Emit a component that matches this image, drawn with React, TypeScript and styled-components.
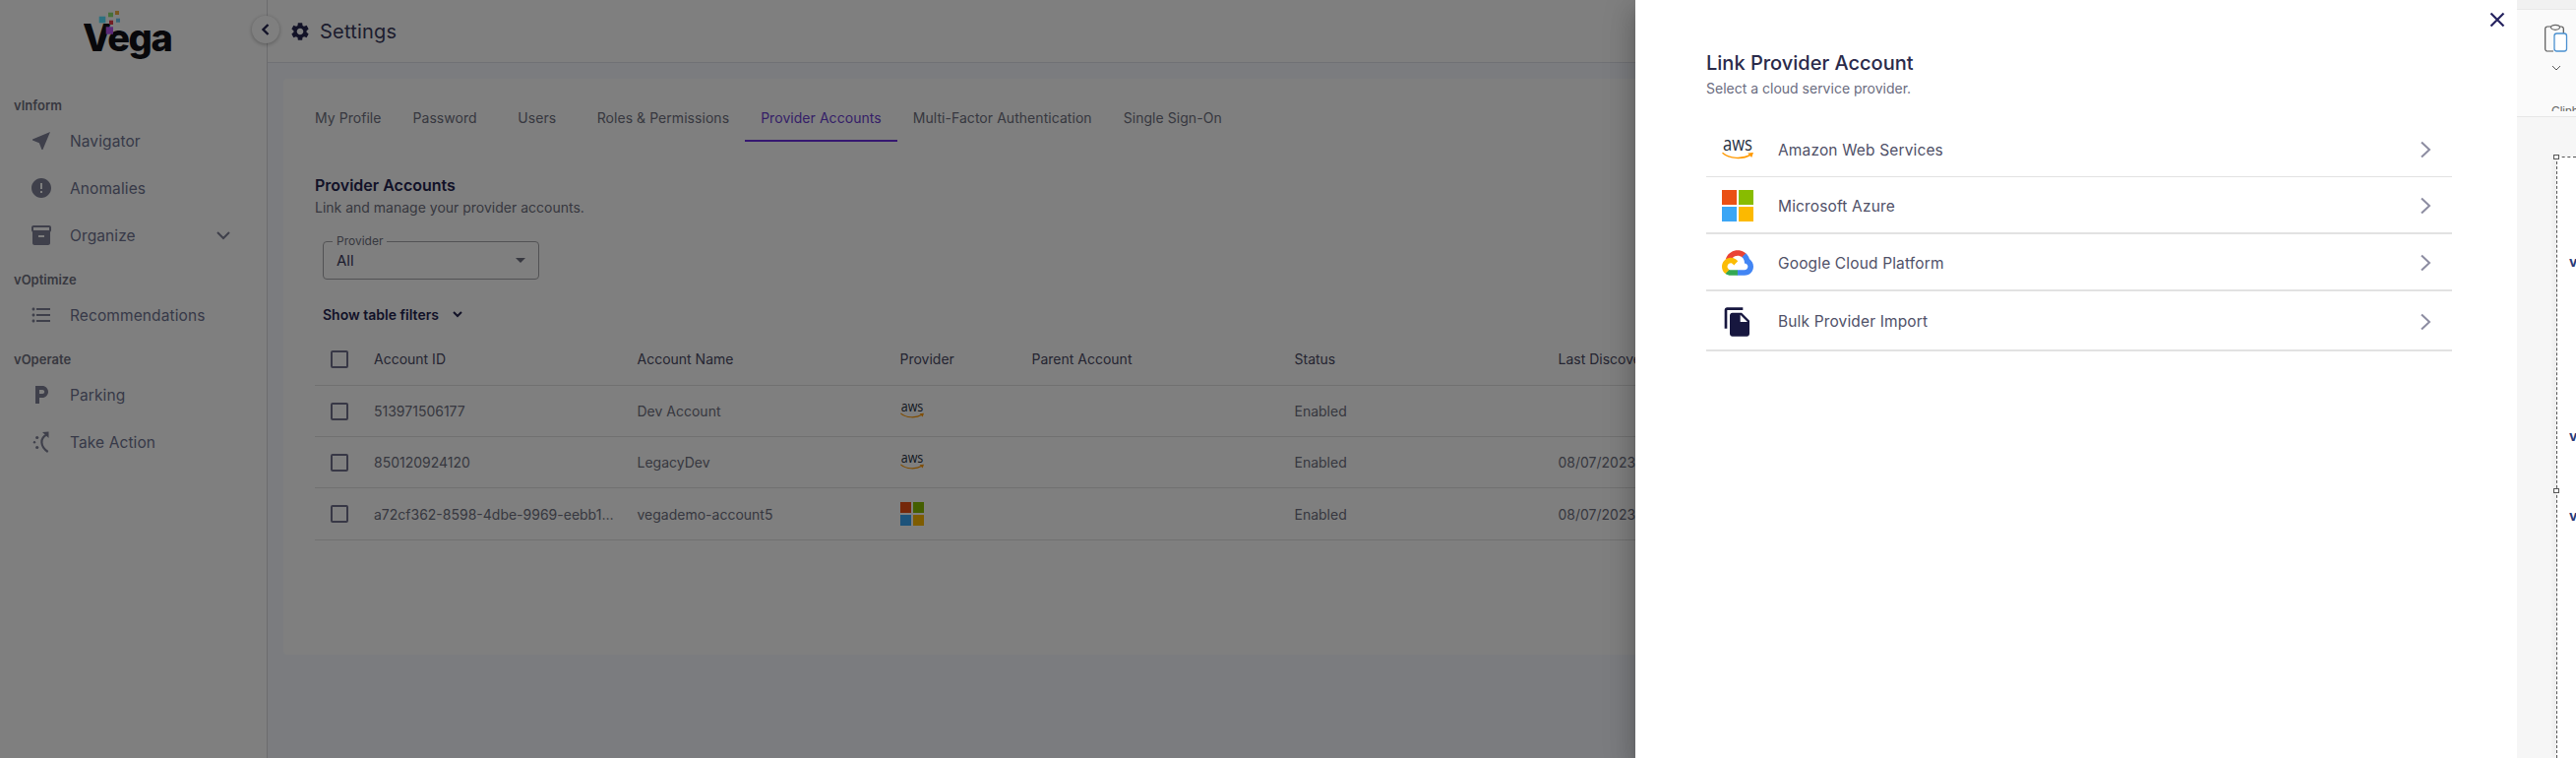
import React from "react";
import styled, { createGlobalStyle } from "styled-components";

const Global = createGlobalStyle`
  html, body { margin: 0; padding: 0; height: 100%; overflow: hidden; background: #fff; }
  body { font-family: Inter, "Noto Sans", sans-serif; color: #2a2a4a; }
  * { box-sizing: border-box; }
`;

const Shell = styled.div`display: flex; width: 2618px; height: 770px; overflow: hidden;`;
const AppFrame = styled.div`position: relative; display: flex; width: 2558px; height: 770px; overflow: hidden; flex: none;`;

const Sidebar = styled.aside`
  width: 272px; flex: none; background: #fff; border-right: 1px solid #d8d8dc;
  display: flex; flex-direction: column; padding-left: 14px;
`;
const LogoWrap = styled.div`height: 96px; padding-left: 71px; padding-top: 10px; flex: none;`;
const GroupLabel = styled.div`
  font-size: 13px; font-weight: 600; color: #6f7080; height: 22px; line-height: 22px; margin-bottom: 1px;
`;
const SideItem = styled.div<{ $last?: boolean }>`
  display: flex; align-items: center; height: 48px; padding-left: 16px; padding-right: 35px;
  font-size: 15.5px; color: #6e7390; gap: 17px; margin-bottom: ${p => (p.$last ? "10px" : "0")};
  position: relative;
  & > svg:first-child { width: 24px; height: 24px; fill: #7e8096; flex: none; }
`;
const SideText = styled.span`flex: 1; letter-spacing: .1px;`;
const SideChevron = styled.svg`width: 18px; height: 18px; fill: none; stroke: #7e8096; stroke-width: 2;`;

const Main = styled.main`flex: 1; min-width: 0; background: #f6f8ff; display: flex; flex-direction: column;`;
const TopBar = styled.header`
  height: 64px; flex: none; background: #fff; border-bottom: 1px solid #e1e3ea;
  display: flex; align-items: center; padding-left: 22px; gap: 9px; position: relative;
`;
const GearIcon = styled.svg`width: 22px; height: 22px; fill: #24244f; flex: none;`;
const PageTitle = styled.h1`margin: 0; font-size: 20px; font-weight: 400; color: #3a3a5c; line-height: 24px; letter-spacing: .2px;`;
const CollapseBtn = styled.button`
  position: absolute; left: -16px; top: 16px; width: 28px; height: 28px; border-radius: 50%;
  border: 0; background: #fff; box-shadow: 0 1px 4px rgba(0,0,0,.3); padding: 0;
  display: flex; align-items: center; justify-content: center;
  svg { width: 14px; height: 14px; fill: none; stroke: #24244f; stroke-width: 2.4; }
`;
const Card = styled.section`
  margin: 16px 16px 0; height: 585px; background: #fff; border-radius: 4px;
  padding: 16px 16px 0; flex: none;
`;
const Tabs = styled.nav`display: flex; height: 48px;`;
const Tab = styled.div<{ $active?: boolean }>`
  min-width: 90px; padding: 0 16px; display: flex; align-items: center; justify-content: center;
  font-size: 14px; letter-spacing: .05px; color: ${p => (p.$active ? "#6b3fd0" : "#6e7080")};
  border-bottom: 2px solid ${p => (p.$active ? "#6b2fe0" : "transparent")};
  white-space: nowrap;
`;
const SectionHead = styled.div`padding: 34px 0 0 16px;`;
const SectionTitle = styled.h2`margin: 0; font-size: 16px; font-weight: 600; line-height: 20px; color: #24244f;`;
const SectionSub = styled.p`margin: 3px 0 0; font-size: 14px; line-height: 20px; color: #6e7080;`;

const SelectField = styled.div`
  margin: 24px 0 0 24px; padding: 0 13px; width: 220px; height: 39px; position: relative;
  border: 1px solid #a5a5a8; border-radius: 4px; display: flex; align-items: center;
`;
const SelectLegend = styled.span`
  position: absolute; top: -8px; left: 9px; padding: 0 4px; background: #fff;
  font-size: 12px; line-height: 14px; color: #6e7080;
`;
const SelectValue = styled.span`font-size: 15px; color: #3a3a5c; flex: 1;`;
const Caret = styled.span`
  width: 0; height: 0; border-left: 5px solid transparent; border-right: 5px solid transparent;
  border-top: 5px solid #6e7080; margin-right: 0;
`;
const Filters = styled.div`
  margin: 24px 0 0 24px; display: flex; align-items: center; gap: 12px; height: 22px;
  font-size: 14px; font-weight: 600; color: #24244f;
  svg { width: 14px; height: 14px; fill: none; stroke: #24244f; stroke-width: 2; }
`;

const Table = styled.div`margin: 8px 0 0 16px; width: 2200px;`;
const Row = styled.div<{ $h: number }>`
  display: grid; grid-template-columns: 60px 267.5px 267px 134px 267px 268px 1fr;
  height: ${p => p.$h}px; align-items: center; border-bottom: 1px solid #e0e0e0;
`;
const HeadCell = styled.div`font-size: 14px; color: #4a4a64; white-space: nowrap;`;
const Cell = styled.div`
  font-size: 14px; color: #6e7080; white-space: nowrap; display: flex; align-items: center;
`;
const Ellipsis = styled.span`display: block; max-width: 246px; overflow: hidden; text-overflow: ellipsis;`;
const CheckCell = styled.div`padding-left: 16px; display: flex; align-items: center;`;
const Check = styled.span`
  width: 18px; height: 18px; border: 2px solid #70708c; border-radius: 2px; display: block;
`;

const Backdrop = styled.div`position: absolute; inset: 0; background: rgba(0,0,0,.5);`;
const Drawer = styled.div`
  position: absolute; top: 0; bottom: 0; right: 0; width: 896px; background: #fff;
  box-shadow: 0 8px 10px -5px rgba(0,0,0,.2), 0 16px 24px 2px rgba(0,0,0,.14), 0 6px 30px 5px rgba(0,0,0,.12);
  padding: 0 66px 0 72px;
`;
const CloseBtn = styled.button`
  position: absolute; top: 10px; right: 10px; width: 20px; height: 20px; padding: 0; border: 0; background: none;
  svg { width: 20px; height: 20px; fill: none; stroke: #25225f; stroke-width: 2.2; display: block; }
`;
const DrawerTitle = styled.h2`
  margin: 0; padding-top: 50px; font-size: 20px; line-height: 28px; font-weight: 500; color: #2a2a4a;
`;
const DrawerSub = styled.p`margin: 2px 0 0; font-size: 14px; line-height: 20px; color: #6a6c80;`;
const ProviderList = styled.div`margin-top: 23px; display: flex; flex-direction: column;`;
const ProviderRow = styled.div<{ $h: number; $line: number }>`
  height: ${p => p.$h}px; display: flex; align-items: center; padding-left: 16px; padding-top: 2px;
  border-bottom: ${p => p.$line}px solid #e2e2e2;
`;
const ProviderIcon = styled.div`width: 32px; height: 32px; flex: none; display: flex; align-items: center; justify-content: center;`;
const ProviderName = styled.span`margin-left: 25px; flex: 1; font-size: 15.5px; letter-spacing: .15px; color: #505168;`;
const RowChevron = styled.svg`width: 14px; height: 18px; fill: none; stroke: #8c8ca1; stroke-width: 2; margin-right: 20px;`;

const AwsSvg = styled.svg<{ $w: number }>`width: ${p => p.$w}px; display: block; overflow: visible;`;
const AwsText = styled.text`font-family: "Open Sans", Inter, sans-serif; font-size: 20px; font-weight: 500; fill: #252f3e;`;
const MsGrid = styled.div<{ $s: number; $g: number }>`
  display: grid; grid-template-columns: ${p => p.$s}px ${p => p.$s}px; gap: ${p => p.$g}px;
`;
const MsTile = styled.span<{ $c: string; $s: number }>`
  width: ${p => p.$s}px; height: ${p => p.$s}px; background: ${p => p.$c}; display: block;
`;
const CloudSvg = styled.svg`width: 32px; height: 26px; display: block;`;
const BulkSvg = styled.svg`width: 32px; height: 32px; fill: #17173f; display: block;`;

const VegaText = styled.text`font-family: Inter, sans-serif; font-weight: 800; font-size: 38px; letter-spacing: -1.5px; fill: #111116;`;

const RightPane = styled.aside`flex: 1; background: #f6f6f6; display: flex; flex-direction: column; overflow: hidden; min-width: 0;`;
const TopStrip = styled.div`height: 10px; flex: none; background: #f1f1f1; border-bottom: 1px solid #e8e8e8;`;
const Ribbon = styled.div`
  height: 109px; flex: none; background: #fafafa; border-bottom: 1px solid #e6e6e6;
  padding: 14px 0 5px 27px;
`;
const RibbonClip = styled.div`height: 100%; overflow: hidden; display: flex; flex-direction: column;`;
const PasteIcon = styled.svg`width: 26px; height: 30px; display: block; flex: none;`;
const RibbonCaret = styled.svg`width: 10px; height: 6px; fill: none; stroke: #555; stroke-width: 1; margin: 12px 0 0 8px; flex: none; display: block;`;
const RibbonLabel = styled.div`margin: 34px 0 0 8px; font-family: "Liberation Sans", sans-serif; font-size: 12px; line-height: 14px; color: #666; white-space: nowrap; flex: none;`;
const Canvas = styled.div`flex: 1; padding: 40px 0 0 40px; min-height: 0;`;
const PageSheet = styled.div`
  position: relative; height: 100%; background: #fff; border-left: 1px dashed #555; border-top: 1px dashed #555;
  box-shadow: -4px 0 4px rgba(0,0,0,.03);
`;
const Handle = styled.span<{ $y: number }>`
  position: absolute; left: -4px; top: ${p => p.$y}px; width: 6px; height: 5px; background: #fff; border: 1px solid #555;
`;
const CanvasV = styled.span<{ $y: number }>`
  position: absolute; left: 12px; top: ${p => p.$y}px; font-size: 14px; line-height: 16px; font-weight: 700; color: #2a3a78;
`;

const AwsLogo = ({ w }: { w: number }) => (
  <AwsSvg $w={w} viewBox="0 0 32 20" aria-label="aws">
    <AwsText x="1" y="11" textLength="30" lengthAdjust="spacingAndGlyphs">aws</AwsText>
    <path d="M0.5 13.2C8 19.6 21 20 29.4 15" fill="none" stroke="#f90" strokeWidth="1.5" />
    <path d="M26.2 13.5 L32 13 L30.2 18 Z" fill="#f90" />
  </AwsSvg>
);
const MsLogo = ({ s, g }: { s: number; g: number }) => (
  <MsGrid $s={s} $g={g}>
    {["#ea5014", "#88bc00", "#3ba6f5", "#fcb900"].map(c => <MsTile key={c} $c={c} $s={s} />)}
  </MsGrid>
);

const Chev = () => <RowChevron viewBox="0 0 14 18"><path d="M3 1.5 11 9 3 16.5" /></RowChevron>;

const providers = [
  { name: "Amazon Web Services", h: 57, line: 1, icon: <AwsLogo w={32} /> },
  { name: "Microsoft Azure", h: 58, line: 2, icon: <MsLogo s={15} g={2} /> },
  {
    name: "Google Cloud Platform", h: 58, line: 2, icon: (
      <CloudSvg viewBox="0 0 256 206">
        <path fill="#EA4335" d="m170.252 56.819 22.253-22.253 1.483-9.37C153.437-11.677 88.976-7.496 52.42 33.92 42.267 45.423 34.734 59.764 30.717 74.573l7.97-1.123 44.505-7.34 3.436-3.513c19.797-21.742 53.27-24.667 76.128-6.168l7.496.39Z" />
        <path fill="#4285F4" d="M224.205 73.918c-5.115-18.836-15.616-35.769-30.217-48.722l-31.232 31.232c13.188 10.776 20.701 27.01 20.379 44.037v5.544c15.351 0 27.797 12.445 27.797 27.796 0 15.352-12.446 27.485-27.797 27.485h-55.671l-5.466 5.934v33.34l5.466 5.231h55.671c39.93.311 72.552-31.494 72.863-71.424.188-24.203-11.745-46.893-31.793-60.453" />
        <path fill="#34A853" d="M71.87 205.796h55.593V161.29H71.87c-3.961-.001-7.797-.852-11.399-2.498l-7.887 2.42-22.409 22.253-1.952 7.574c12.567 9.489 27.9 14.825 43.647 14.757" />
        <path fill="#FBBC05" d="M71.87 61.425C31.94 61.664-.237 94.228.001 134.159c.134 22.298 10.547 43.288 28.222 56.881l32.248-32.248c-13.991-6.321-20.208-22.786-13.887-36.776 6.32-13.99 22.786-20.207 36.775-13.887 6.161 2.784 11.095 7.718 13.88 13.887l32.248-32.248c-13.72-17.936-35.04-28.42-57.617-28.343" />
      </CloudSvg>
    )
  },
  {
    name: "Bulk Provider Import", h: 61, line: 2, icon: (
      <BulkSvg viewBox="0 0 24 24"><path d="M16 1H4c-1.1 0-2 .9-2 2v14h2V3h12V1zm-1 4 6 6v10c0 1.1-.9 2-2 2H7.99C6.89 23 6 22.1 6 21l.01-14c0-1.1.89-2 1.99-2h7zm-1 7h5.5L14 6.5V12z" /></BulkSvg>
    )
  },
];

const accounts = [
  { id: "513971506177", name: "Dev Account", aws: true, date: "", h: 52 },
  { id: "850120924120", name: "LegacyDev", aws: true, date: "08/07/2023", h: 52 },
  { id: "a72cf362-8598-4dbe-9969-eebb1c4a70de", name: "vegademo-account5", aws: false, date: "08/07/2023", h: 53 },
];

export default function App() {
  return (
    <Shell>
      <Global />
      <AppFrame>
        <Sidebar>
          <LogoWrap>
            <svg width="90" height="56" viewBox="0 0 90 56" aria-label="Vega">
              <VegaText x="-1" y="42">Vega</VegaText>
              <rect x="15.7" y="6.7" width="6.6" height="6.6" fill="#58e0ff" />
              <rect x="25" y="2.700" width="5" height="4.600" fill="#8fe070" />
              <rect x="26" y="10.700" width="4" height="4.300" fill="#e83a48" />
              <rect x="32" y="1" width="4" height="4" fill="#f0b040" />
              <rect x="33" y="8.700" width="4" height="4" fill="#6cc8f0" />
              <rect x="22.700" y="17.300" width="7.300" height="7.400" fill="#b654f0" />
            </svg>
          </LogoWrap>
          <GroupLabel>vInform</GroupLabel>
          <SideItem>
            <svg viewBox="0 0 24 24"><path d="M21 3 3 10.53v.98l6.84 2.65L12.48 21h.98L21 3z" /></svg>
            <SideText>Navigator</SideText>
          </SideItem>
          <SideItem>
            <svg viewBox="0 0 24 24"><path d="M12 2C6.48 2 2 6.48 2 12s4.48 10 10 10 10-4.48 10-10S17.52 2 12 2zm1 15h-2v-2h2v2zm0-4h-2V7h2v6z" /></svg>
            <SideText>Anomalies</SideText>
          </SideItem>
          <SideItem $last>
            <svg viewBox="0 0 24 24"><path d="M20 2H4c-1 0-2 .9-2 2v3.01c0 .72.43 1.34 1 1.69V20c0 1.1 1.1 2 2 2h14c.9 0 2-.9 2-2V8.7c.57-.35 1-.97 1-1.69V4c0-1.1-1-2-2-2zm-5 12H9v-2h6v2zm5-7H4V4l16-.02V7z" /></svg>
            <SideText>Organize</SideText>
            <SideChevron viewBox="0 0 18 18"><path d="M3 6l6 6 6-6" /></SideChevron>
          </SideItem>
          <GroupLabel>vOptimize</GroupLabel>
          <SideItem $last>
            <svg viewBox="0 0 24 24"><path d="M4 10.5c-.83 0-1.5.67-1.5 1.5s.67 1.5 1.5 1.5 1.5-.67 1.5-1.5-.67-1.5-1.5-1.5zm0-6c-.83 0-1.5.67-1.5 1.5S3.17 7.5 4 7.5 5.5 6.83 5.5 6 4.83 4.5 4 4.5zm0 12c-.83 0-1.5.68-1.5 1.5s.68 1.5 1.5 1.5 1.5-.68 1.5-1.5-.67-1.5-1.5-1.5zM7 19h14v-2H7v2zm0-6h14v-2H7v2zm0-8v2h14V5H7z" /></svg>
            <SideText>Recommendations</SideText>
          </SideItem>
          <GroupLabel>vOperate</GroupLabel>
          <SideItem>
            <svg viewBox="0 0 24 24"><path d="M13 3H6v18h4v-6h3c3.31 0 6-2.69 6-6s-2.69-6-6-6zm.2 8H10V7h3.2c1.1 0 2 .9 2 2s-.9 2-2 2z" /></svg>
            <SideText>Parking</SideText>
          </SideItem>
          <SideItem>
            <svg viewBox="0 0 24 24">
              <circle cx="5" cy="12.300" r="1.200" />
              <circle cx="7.700" cy="7.500" r="1.600" />
              <circle cx="7.700" cy="17.500" r="1.600" />
              <path d="M17.500 4.500C10.500 8 10.500 16.500 18.700 22" fill="none" stroke="#7e8096" strokeWidth="2.200" />
              <path d="M13 2 19.500 1.500 19.500 8Z" />
            </svg>
            <SideText>Take Action</SideText>
          </SideItem>
        </Sidebar>
        <Main>
          <TopBar>
            <CollapseBtn aria-label="Collapse">
              <svg viewBox="0 0 14 14"><path d="M9.5 2 4.500 7l5 5" /></svg>
            </CollapseBtn>
            <GearIcon viewBox="0 0 24 24"><path d="M19.14 12.94c.04-.3.06-.61.06-.94 0-.32-.02-.64-.07-.94l2.03-1.58c.18-.14.23-.41.12-.61l-1.92-3.32c-.12-.22-.37-.29-.59-.22l-2.39.96c-.5-.38-1.03-.7-1.62-.94l-.36-2.54c-.04-.24-.24-.41-.48-.41h-3.84c-.24 0-.43.17-.47.41l-.36 2.54c-.59.24-1.13.57-1.62.94l-2.39-.96c-.22-.08-.47 0-.59.22L2.74 8.87c-.12.21-.08.47.12.61l2.03 1.58c-.05.3-.09.63-.09.94s.02.64.07.94l-2.03 1.58c-.18.14-.23.41-.12.61l1.92 3.32c.12.22.37.29.59.22l2.39-.96c.5.38 1.03.7 1.62.94l.36 2.54c.05.24.24.41.48.41h3.84c.24 0 .44-.17.47-.41l.36-2.54c.59-.24 1.13-.56 1.62-.94l2.39.96c.22.08.47 0 .59-.22l1.92-3.32c.12-.22.07-.47-.12-.61l-2.01-1.58zM12 15.6c-1.98 0-3.6-1.62-3.6-3.6s1.62-3.6 3.6-3.6 3.6 1.62 3.6 3.6-1.62 3.6-3.6 3.6z" /></GearIcon>
            <PageTitle>Settings</PageTitle>
          </TopBar>
          <Card>
            <Tabs>
              <Tab>My Profile</Tab>
              <Tab>Password</Tab>
              <Tab>Users</Tab>
              <Tab>Roles &amp; Permissions</Tab>
              <Tab $active>Provider Accounts</Tab>
              <Tab>Multi-Factor Authentication</Tab>
              <Tab>Single Sign-On</Tab>
            </Tabs>
            <SectionHead>
              <SectionTitle>Provider Accounts</SectionTitle>
              <SectionSub>Link and manage your provider accounts.</SectionSub>
            </SectionHead>
            <SelectField>
              <SelectLegend>Provider</SelectLegend>
              <SelectValue>All</SelectValue>
              <Caret />
            </SelectField>
            <Filters>
              Show table filters
              <svg viewBox="0 0 14 14"><path d="M3 5l4 4 4-4" /></svg>
            </Filters>
            <Table>
              <Row $h={54}>
                <CheckCell><Check /></CheckCell>
                <HeadCell>Account ID</HeadCell>
                <HeadCell>Account Name</HeadCell>
                <HeadCell>Provider</HeadCell>
                <HeadCell>Parent Account</HeadCell>
                <HeadCell>Status</HeadCell>
                <HeadCell>Last Discovered</HeadCell>
              </Row>
              {accounts.map(a => (
                <Row key={a.id} $h={a.h}>
                  <CheckCell><Check /></CheckCell>
                  <Cell><Ellipsis>{a.id}</Ellipsis></Cell>
                  <Cell>{a.name}</Cell>
                  <Cell>{a.aws ? <AwsLogo w={24} /> : <MsLogo s={11} g={2} />}</Cell>
                  <Cell />
                  <Cell>Enabled</Cell>
                  <Cell>{a.date}</Cell>
                </Row>
              ))}
            </Table>
          </Card>
        </Main>
        <Backdrop />
        <Drawer>
          <CloseBtn aria-label="Close">
            <svg viewBox="0 0 20 20"><path d="M3.500 3.500 16.500 16.500M16.500 3.500 3.500 16.500" /></svg>
          </CloseBtn>
          <DrawerTitle>Link Provider Account</DrawerTitle>
          <DrawerSub>Select a cloud service provider.</DrawerSub>
          <ProviderList>
            {providers.map(p => (
              <ProviderRow key={p.name} $h={p.h} $line={p.line}>
                <ProviderIcon>{p.icon}</ProviderIcon>
                <ProviderName>{p.name}</ProviderName>
                <Chev />
              </ProviderRow>
            ))}
          </ProviderList>
        </Drawer>
      </AppFrame>
      <RightPane>
        <TopStrip />
        <Ribbon>
          <RibbonClip>
            <PasteIcon viewBox="0 0 26 30">
              <path d="M8 3H4A2.300 2.300 0 0 0 1.700 5.300v20.400A2.300 2.300 0 0 0 4 28H10M16 3h2A2.300 2.300 0 0 1 20.300 5.300V10" fill="none" stroke="#555" strokeWidth="1.200" />
              <ellipse cx="12" cy="3.800" rx="4.500" ry="2.500" fill="#fafafa" stroke="#666" strokeWidth="1.200" />
              <rect x="11" y="10" width="12.500" height="18" rx="2.500" fill="#fff" stroke="#4a90d0" strokeWidth="1.300" />
            </PasteIcon>
            <RibbonCaret viewBox="0 0 10 6"><path d="M1 1l4 4 4-4" /></RibbonCaret>
            <RibbonLabel>Clipboard</RibbonLabel>
          </RibbonClip>
        </Ribbon>
        <Canvas>
          <PageSheet>
            <Handle $y={-3} />
            <Handle $y={336} />
            <CanvasV $y={98}>v</CanvasV>
            <CanvasV $y={275}>v</CanvasV>
            <CanvasV $y={356}>v</CanvasV>
          </PageSheet>
        </Canvas>
      </RightPane>
    </Shell>
  );
}
